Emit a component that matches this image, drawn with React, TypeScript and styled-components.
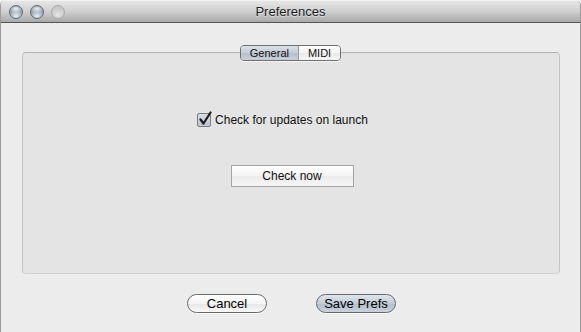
import React from "react";
import { styled, createGlobalStyle, css } from "styled-components";

const GlobalStyle = createGlobalStyle`
  html, body {
    margin: 0;
    padding: 0;
    background: #ffffff;
  }
  body {
    font-family: "Liberation Sans", Arial, sans-serif;
  }
`;

const Window = styled.div`
  display: flex;
  flex-direction: column;
  width: 581px;
  height: 332px;
  box-sizing: border-box;
  border-left: 1px solid #9c9c9c;
  border-right: 1px solid #9c9c9c;
  border-radius: 5px 5px 0 0;
  overflow: hidden;
  background: #ececec;
`;

const TitleBar = styled.div`
  position: relative;
  display: flex;
  align-items: center;
  justify-content: center;
  flex-shrink: 0;
  height: 23px;
  box-sizing: border-box;
  border-top: 1px solid #f2f2f2;
  border-bottom: 1px solid #555555;
  background: linear-gradient(#e6e6e6, #cfcfcf 50%, #a9a9a9);
`;

const Lights = styled.div`
  position: absolute;
  left: 8px;
  top: 4px;
  display: flex;
  gap: 7px;
`;

const Light = styled.div<{ $off?: boolean }>`
  width: 14px;
  height: 14px;
  border-radius: 50%;
  box-sizing: border-box;
  ${({ $off }) =>
    $off
      ? css`
          border: 1px solid #a9a9a9;
          background: radial-gradient(circle at 50% 75%, #e4e4e4, #c6c6c6 70%);
        `
      : css`
          border: 1px solid #5f6873;
          background: radial-gradient(
              ellipse 60% 35% at 50% 22%,
              rgba(255, 255, 255, 0.85),
              rgba(255, 255, 255, 0) 100%
            ),
            radial-gradient(circle at 50% 85%, #e8eef4, #9aa6b3 55%, #6d7884);
        `}
`;

const Title = styled.div`
  font-size: 13px;
  color: #1e1e1e;
  text-shadow: 0 1px 0 rgba(255, 255, 255, 0.5);
`;

const Content = styled.div`
  flex: 1;
  display: flex;
  flex-direction: column;
  align-items: center;
  padding-top: 22px;
`;

const Tabs = styled.div`
  position: relative;
  z-index: 1;
  display: flex;
  height: 16px;
  box-sizing: border-box;
  border: 1px solid #6f6f6f;
  border-radius: 4px;
  overflow: hidden;
  box-shadow: 0 1px 0 rgba(255, 255, 255, 0.6);
`;

const Tab = styled.div<{ $active?: boolean }>`
  display: flex;
  align-items: center;
  justify-content: center;
  font-size: 11px;
  color: #111;
  padding: 0 9px;
  background: ${({ $active }) =>
    $active
      ? "linear-gradient(#d9e0e8, #c3ccd6 50%, #b6c0cc 51%, #c7d0da)"
      : "linear-gradient(#ffffff, #f4f4f4 50%, #e9e9e9 51%, #f6f6f6)"};
  & + & {
    border-left: 1px solid #9a9a9a;
  }
`;

const TabBox = styled.div`
  display: flex;
  flex-direction: column;
  align-items: center;
  width: 538px;
  height: 222px;
  box-sizing: border-box;
  margin-top: -9px;
  border: 1px solid #c4c4c4;
  border-top-color: #b3b3b3;
  border-bottom-color: #d2d2d2;
  border-radius: 4px;
  background: #e4e4e4;
  padding-top: 60px;
`;

const CheckRow = styled.label`
  display: flex;
  align-items: center;
  gap: 4px;
  font-size: 12px;
  color: #111;
  margin-left: -16px;
`;

const CheckBox = styled.span`
  position: relative;
  width: 14px;
  height: 14px;
  box-sizing: border-box;
  border: 1px solid #7c7c7c;
  border-radius: 2px;
  background: linear-gradient(#d6dde5, #bcc6d1);
`;

const CheckMark = styled.svg`
  position: absolute;
  left: 1px;
  top: -3px;
`;

const SquareButton = styled.button`
  margin-top: 38px;
  margin-left: 3px;
  width: 123px;
  height: 22px;
  box-sizing: border-box;
  border: 1px solid #a4a4a4;
  border-radius: 0;
  background: linear-gradient(#ffffff, #f3f3f3 50%, #ebebeb 51%, #f6f6f6);
  font-family: "Liberation Sans", Arial, sans-serif;
  font-size: 12px;
  color: #111;
  padding: 0;
`;

const Footer = styled.div`
  display: flex;
  gap: 49px;
  margin-top: 20px;
  margin-left: 2px;
`;

const PillButton = styled.button<{ $default?: boolean }>`
  width: 80px;
  height: 19px;
  box-sizing: border-box;
  border: 1px solid #6a6a6a;
  border-radius: 10px;
  padding: 0;
  font-family: "Liberation Sans", Arial, sans-serif;
  font-size: 13px;
  color: #000;
  box-shadow: 0 1px 0 rgba(255, 255, 255, 0.7);
  background: ${({ $default }) =>
    $default
      ? "linear-gradient(#dfe5ec, #c2ccd7 50%, #b1bdca 51%, #c9d3dd)"
      : "linear-gradient(#ffffff, #f4f4f4 50%, #e6e6e6 51%, #f8f8f8)"};
`;

const App = () => {
  return (
    <>
      <GlobalStyle />
      <Window>
        <TitleBar>
          <Lights>
            <Light />
            <Light />
            <Light $off />
          </Lights>
          <Title>Preferences</Title>
        </TitleBar>
        <Content>
          <Tabs>
            <Tab $active>General</Tab>
            <Tab>MIDI</Tab>
          </Tabs>
          <TabBox>
            <CheckRow>
              <CheckBox>
                <CheckMark width="13" height="15" viewBox="0 0 13 15">
                  <path
                    d="M1.5 8.5 L4.5 12.5 L11.5 1.5"
                    fill="none"
                    stroke="#1c1c1c"
                    strokeWidth="2.2"
                    strokeLinecap="round"
                    strokeLinejoin="round"
                  />
                </CheckMark>
              </CheckBox>
              Check for updates on launch
            </CheckRow>
            <SquareButton>Check now</SquareButton>
          </TabBox>
          <Footer>
            <PillButton>Cancel</PillButton>
            <PillButton $default>Save Prefs</PillButton>
          </Footer>
        </Content>
      </Window>
    </>
  );
};

export default App;
